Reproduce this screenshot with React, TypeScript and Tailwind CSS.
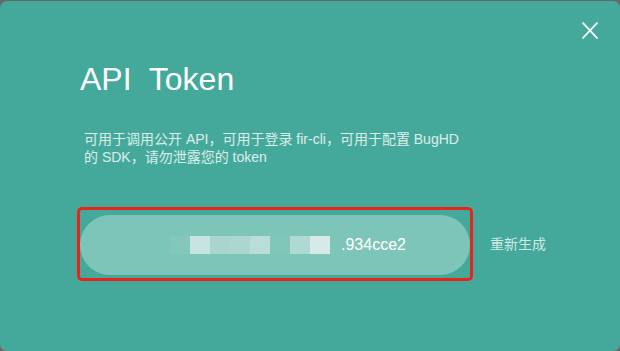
const mosaico = [
  "bg-[#84c7bb]",
  "bg-[#c6e4e1]",
  "bg-[#a9d5ce]",
  "bg-[#acd6d0]",
  "bg-[#b9ddd8]",
  "bg-[#82c6ba]",
  "bg-[#b0d9d3]",
  "bg-[#d6ebe8]",
];

export default function App() {
  return (
    <div className="w-[620px] h-[351px] bg-[#686868] pt-px font-['Liberation_Sans','Noto_Sans_CJK_SC',sans-serif]">
      <div className="relative h-[350px] rounded-[7px] bg-[#44a99b] pl-[80px] pt-[62px]">
        {/* Cerrar */}
        <button className="absolute right-[22px] top-[21px] text-white">
          <svg width="16" height="17" viewBox="0 0 16 17" fill="none" stroke="currentColor" strokeWidth="1.8">
            <path d="M0.5 0.5 L15.5 16.5 M15.5 0.5 L0.5 16.5" />
          </svg>
        </button>

        <h1 className="text-[32px] leading-none text-white whitespace-pre">
          API  Token
        </h1>

        <p className="mt-[35px] ml-[4px] w-[385px] text-[14px] leading-[18px] text-white/80">
          可用于调用公开 API，可用于登录 fir-cli，可用于配置 BugHD 的 SDK，请勿泄露您的 token
        </p>

        {/* Token */}
        <div className="mt-[41px] ml-[-3px] flex items-center">
          <div className="rounded-[5px] border-[3px] border-[#e6261c] pt-[5px] pb-[3px]">
            <div className="flex h-[60px] w-[390px] items-center rounded-full bg-[#7ec5b9] pl-[90px]">
              <div className="flex">
                {mosaico.map((c, i) => (
                  <div key={i} className={`h-[18px] w-[20px] ${c}`} />
                ))}
              </div>
              <span className="ml-[11px] text-[16px] text-white">.934cce2</span>
            </div>
          </div>
          <span className="ml-[17px] text-[14px] text-white/75">重新生成</span>
        </div>
      </div>
    </div>
  );
}
